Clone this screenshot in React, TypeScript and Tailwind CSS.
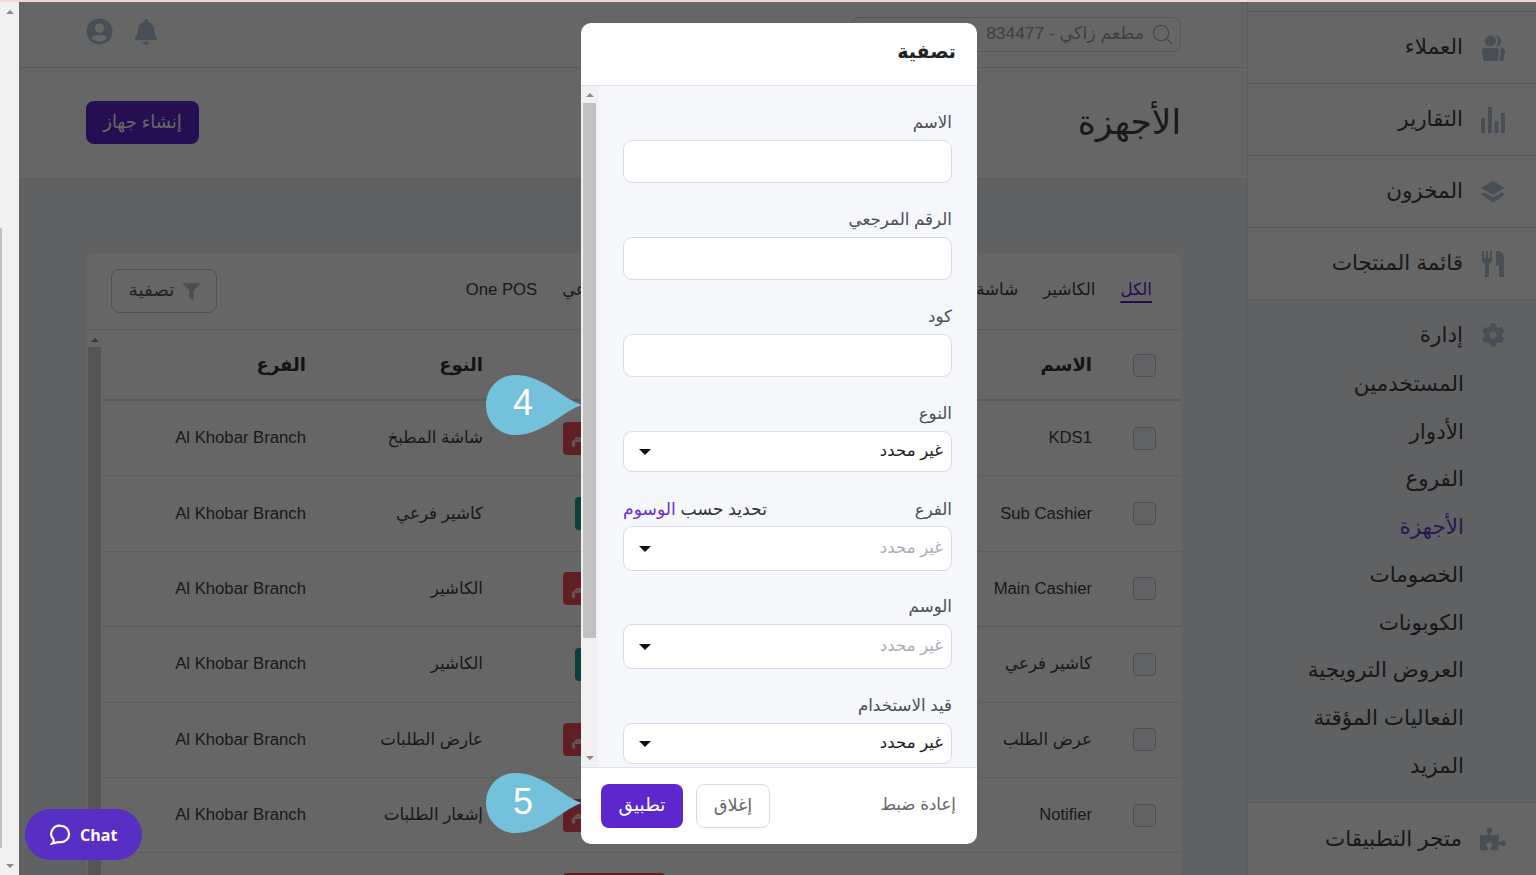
import { FaBell, FaCog, FaFilter, FaPuzzlePiece, FaUserCircle } from "react-icons/fa";

const tabs = ["الكل", "الكاشير", "شاشة المطبخ", "عرض الطلب", "إشعار الطلبات", "كاشير فرعي", "One POS"];

const rows = [
  { name: "KDS1", used: false, type: "شاشة المطبخ", branch: "Al Khobar Branch", border: "border-[#e6e8ee]" },
  { name: "Sub Cashier", used: true, type: "كاشير فرعي", branch: "Al Khobar Branch", border: "border-[#e6e8ee]" },
  { name: "Main Cashier", used: false, type: "الكاشير", branch: "Al Khobar Branch", border: "border-[#d9dce6]" },
  { name: "كاشير فرعي", used: true, type: "الكاشير", branch: "Al Khobar Branch", border: "border-[#e6e8ee]" },
  { name: "عرض الطلب", used: false, type: "عارض الطلبات", branch: "Al Khobar Branch", border: "border-[#e6e8ee]" },
  { name: "Notifier", used: false, type: "إشعار الطلبات", branch: "Al Khobar Branch", border: "border-[#e6e8ee]" },
];

const subItems = ["المستخدمين", "الأدوار", "الفروع", "الأجهزة", "الخصومات", "الكوبونات", "العروض الترويجية", "الفعاليات المؤقتة", "المزيد"];

function CustomersIcon() {
  return (
    <svg viewBox="0 0 24 26" className="w-6 h-[26px] fill-[#b4c4d6]">
      <circle cx="9.500" cy="6" r="5.500" />
      <path d="M14.500 0c3.200.4 5.500 2.800 5.500 6s-2.300 5.600-5.500 6c1.500-1.600 2.300-3.700 2.300-6s-.8-4.400-2.300-6z" />
      <path d="M1 16c0-1.700 1.300-3 3-3h11c1.700 0 3 1.300 3 3l-1.500 10h-14z" />
      <path d="M20 13c2.400 0 4 1.100 4 3l-1.500 10h-4z" />
    </svg>
  );
}

function ReportsIcon() {
  return (
    <svg viewBox="0 0 24 26" className="w-6 h-[26px] fill-[#b4c4d6]">
      <rect x="0" y="11" width="4" height="15" />
      <rect x="7" y="0" width="4" height="26" />
      <rect x="13.500" y="14" width="4" height="12" />
      <rect x="20" y="6" width="4" height="20" />
    </svg>
  );
}

function LayersIcon() {
  return (
    <svg viewBox="0 0 26 24" className="w-[26px] h-6 fill-[#b4c4d6]">
      <path d="M13 0l13 7.500L13 15 0 7.500z" />
      <path d="M3.500 12.500L13 18l9.500-5.500L26 14.500 13 24 0 14.500z" />
    </svg>
  );
}

function UtensilsIcon() {
  return (
    <svg viewBox="0 0 24 26" className="w-6 h-[26px] fill-[#b4c4d6]">
      <path d="M1 0h2v7h2V0h2v7h2V0h2v9c0 2-1 3.500-3 4v13H4V13c-2-.5-3-2-3-4z" />
      <path d="M15 0h1c4 0 7 2.500 7 7v19h-5V15h-3z" />
    </svg>
  );
}

function Caret() {
  return (
    <svg viewBox="0 0 12 6" className="w-3 h-1.5 fill-[#111]">
      <path d="M0 0h12L6 6z" />
    </svg>
  );
}

function Arrow({ down }: { down?: boolean }) {
  return (
    <svg viewBox="0 0 8 4" className="w-2 h-1 fill-[#8a8a8a]">
      <path d={down ? "M0 0h8L4 4z" : "M0 4h8L4 0z"} />
    </svg>
  );
}

function Callout({ n, top, nudge }: { n: number; top: string; nudge: string }) {
  return (
    <div dir="ltr" className={`absolute left-[486px] w-[96px] h-[60px] flex items-center ${top}`}>
      <svg viewBox="0 0 96 60" className="absolute inset-0 w-[96px] h-[60px] fill-[#74c1dc]">
        <path d="M96 30C78 25 58 0 29 0 13 0 0 13 0 30s13 30 29 30C58 60 78 35 96 30z" />
      </svg>
      <span className={`relative w-[74px] text-center text-[36px] leading-none text-white ${nudge}`}>{n}</span>
    </div>
  );
}

function Field({ label, mt, mb, children, extra }: { label: string; mt: string; mb: string; children: React.ReactNode; extra?: React.ReactNode }) {
  return (
    <div className={mt}>
      <div className={`h-[22px] pt-[2px] flex items-center justify-between text-[16.7px] text-[#4a4f57] ${mb}`}>
        <span>{label}</span>
        {extra}
      </div>
      {children}
    </div>
  );
}

function TextBox() {
  return <input className="block w-full h-[43px] bg-white border border-[#d8dcea] rounded-[9px]" />;
}

function SelectBox({ h, muted }: { h: string; muted?: boolean }) {
  return (
    <div className={`w-full bg-white border border-[#d8dcea] rounded-[9px] flex items-center justify-between pr-2 pl-[15px] ${h}`}>
      <span className={muted ? "text-[16.6px] text-[#a9aeb8]" : "text-[16.6px] text-[#222]"}>غير محدد</span>
      <Caret />
    </div>
  );
}

export default function App() {
  return (
    <div dir="rtl" className="relative w-[1536px] h-[875px] overflow-hidden bg-[#f0f2f7] text-[#3f3f3f] [font-family:'Liberation_Sans','DejaVu_Sans',sans-serif]">
      <div className="h-[2px] bg-[#f3d9d3]" />
      <div className="flex h-[873px]">
        {/* sidebar */}
        <aside className="w-[289px] shrink-0 bg-white border-l border-[#e3e5ec] text-[21.5px]">
          <div className="h-[10px] border-b border-[#e1e3ea]" />
          {[
            { label: "العملاء", icon: <CustomersIcon /> },
            { label: "التقارير", icon: <ReportsIcon /> },
            { label: "المخزون", icon: <LayersIcon /> },
            { label: "قائمة المنتجات", icon: <UtensilsIcon /> },
          ].map((item) => (
            <div key={item.label} className="h-[72px] flex items-center gap-[18px] pr-[31px] border-b border-[#e1e3ea]">
              <span className="w-6 flex justify-center">{item.icon}</span>
              <span className="-mt-[1px]">{item.label}</span>
            </div>
          ))}
          <div className="bg-[#f0f2f7] pb-3 border-b border-[#e1e3ea]">
            <div className="h-[60px] pt-[10px] flex items-center gap-[18px] pr-[31px]">
              <FaCog className="w-6 h-6 text-[#b4c4d6]" />
              <span>إدارة</span>
            </div>
            {subItems.map((item) => (
              <div key={item} className={item === "الأجهزة" ? "h-[47.75px] flex items-center pr-[72px] text-[#6a3cc4]" : "h-[47.75px] flex items-center pr-[72px]"}>
                {item}
              </div>
            ))}
          </div>
          <div className="h-[72px] flex items-center gap-[18px] pr-[30px]">
            <FaPuzzlePiece className="w-[26px] h-[26px] text-[#b4c4d6]" />
            <span>متجر التطبيقات</span>
          </div>
        </aside>

        {/* main */}
        <main className="w-[1228px] shrink-0 pb-10">
          <header className="h-[66px] bg-white border-b border-[#e1e3ea] flex items-center justify-between pr-[66px] pl-[67px]">
            <div className="w-[330px] h-[35px] border border-[#d8dcea] rounded-lg flex items-center gap-[8px] pr-[7px] text-[17.4px] text-[#9aa0aa]">
              <svg viewBox="0 0 22 22" className="w-[21px] h-[21px] fill-none stroke-[#a9afb9] stroke-[1.3]">
                <circle cx="9.500" cy="9.500" r="8" />
                <path d="M15 15l6 6" />
              </svg>
              <span className="-mt-[2px]">مطعم زاكي - 834477</span>
            </div>
            <div className="flex items-center gap-[21px] -mt-[6px]">
              <FaBell className="w-6 h-[26px] text-[#b4c4d6]" />
              <FaUserCircle className="w-[27px] h-[27px] text-[#b4c4d6]" />
            </div>
          </header>

          <div className="h-[111px] bg-white border-b border-[#e9ebf1] flex items-center justify-between pr-[66px] pl-[67px]">
            <h1 className="text-[34.4px] font-normal -mt-[1px]">الأجهزة</h1>
            <button className="w-[113px] h-[43px] -mt-[2px] bg-[#5d27cd] rounded-lg text-[18px] text-white">إنشاء جهاز</button>
          </div>

          <section className="mt-[74px] mr-[66px] ml-[67px] bg-white rounded-lg">
            <div className="h-[77px] border-b border-[#e1e3ea] flex items-center justify-between pr-[29px] pl-[25px]">
              <div className="flex items-center gap-[25px] text-[16.7px] -mt-[2px]">
                {tabs.map((tab, i) => (
                  <span key={tab} className={i === 0 ? "text-[#5d27cd] underline underline-offset-[6px] decoration-2" : i === 3 ? "ml-[10px]" : ""}>
                    {tab}
                  </span>
                ))}
              </div>
              <button className="w-[106px] h-[44px] border border-[#c7cbd8] rounded-lg flex items-center justify-center gap-2 text-[18.5px] text-[#555]">
                <FaFilter className="w-[17px] h-[17px] text-[#b4c4d6]" />
                <span className="-mt-[2px]">تصفية</span>
              </button>
            </div>

            <div className="flex">
              <div className="w-[1078px] shrink-0">
                <div className="h-[71px] pt-[2px] grid grid-cols-[89px_427px_182px_177px_203px] items-center border-b-2 border-[#dcdfe8] text-[18px] font-bold text-[#333]">
                  <span className="w-[23px] h-[23px] mr-[25px] bg-[#f3f4f8] border border-[#c0c4d0] rounded" />
                  <span>الاسم</span>
                  <span>الحالة</span>
                  <span>النوع</span>
                  <span>الفرع</span>
                </div>
                {rows.map((row) => (
                  <div key={row.name} className={`h-[75.4px] grid grid-cols-[89px_427px_182px_177px_203px] items-center border-b text-[16.7px] ${row.border}`}>
                    <span className="w-[23px] h-[23px] mr-[25px] bg-[#f3f4f8] border border-[#c0c4d0] rounded" />
                    <span className="-mt-[1px]">{row.name}</span>
                    {row.used ? (
                      <span className="w-[90px] h-[33px] flex items-center justify-center rounded bg-[#1aa19b] text-white overflow-hidden whitespace-nowrap text-[14px]">قيد الاستخدام</span>
                    ) : (
                      <span className="w-[102px] h-[33px] flex items-center justify-end pl-2 rounded bg-[#ef5259] text-[#ffd4d6] font-bold whitespace-nowrap text-[16px]">غير مستخدم</span>
                    )}
                    <span className="-mt-[1px]">{row.type}</span>
                    <span className="-mt-[1px]">{row.branch}</span>
                  </div>
                ))}
                {/* next row starts just under the fold */}
                <div className="h-[75px] grid grid-cols-[89px_427px_182px_177px_203px] pt-5">
                  <span />
                  <span />
                  <span className="w-[102px] h-[33px] rounded bg-[#ef5259]" />
                </div>
              </div>
              {/* table scroll bar */}
              <div className="w-[17px] shrink-0 flex flex-col items-center pt-2 gap-[5px]">
                <Arrow />
                <div className="w-[13px] h-[600px] bg-[#d4d4d4]" />
              </div>
            </div>
          </section>
        </main>

        {/* page scroll bar */}
        <div className="relative w-[19px] shrink-0 bg-[#f1f1f1]">
          <div className="absolute top-2 left-[6px]"><Arrow /></div>
          <div className="absolute top-[226px] left-0 w-[2px] h-[620px] bg-[#c1c1c1]" />
          <div className="absolute top-[862px] left-[6px]"><Arrow down /></div>
        </div>
      </div>

      {/* backdrop */}
      <div className="absolute top-[2px] bottom-0 right-0 left-[19px] bg-black/60" />

      {/* chat */}
      <div dir="ltr" className="absolute left-[25px] top-[809px] w-[117px] h-[51px] rounded-full bg-[#582fc4] flex items-center gap-[9px] pl-[25px] text-white text-[16px] font-bold [font-family:'Open_Sans',sans-serif]">
        <svg viewBox="0 0 22 22" className="w-[21px] h-[21px] fill-none stroke-white stroke-[2.300]">
          <path d="M11.500 2a8.500 8.500 0 0 1 0 17c-2.500 0-5.500.5-9 1.500 1.500-1.500 1.500-3 1-4.500A8.500 8.500 0 0 1 11.500 2z" />
        </svg>
        <span>Chat</span>
      </div>

      {/* filter modal */}
      <div className="absolute left-[581px] top-[23px] w-[396px] h-[821px] bg-white rounded-[10px] overflow-hidden flex flex-col">
        <div className="h-[63px] shrink-0 border-b border-[#dde2ee] flex items-center pr-[21px] pb-1 text-[19px] font-bold text-[#222]">تصفية</div>
        <div className="flex-1 min-h-0 flex bg-[#f5f7fb]">
          <div className="w-[379px] shrink-0 pr-[25px] pl-[25px] pt-[25px] overflow-hidden">
            <Field label="الاسم" mt="" mb="mb-[7px]"><TextBox /></Field>
            <Field label="الرقم المرجعي" mt="mt-[25px]" mb="mb-[7px]"><TextBox /></Field>
            <Field label="كود" mt="mt-[25px]" mb="mb-[7px]"><TextBox /></Field>
            <Field label="النوع" mt="mt-[25px]" mb="mb-[7px]"><SelectBox h="h-[41px]" /></Field>
            <Field
              label="الفرع"
              mt="mt-[26px]"
              mb="mb-[6px]"
              extra={<span className="text-[17.2px] text-[#333]">تحديد حسب <span className="text-[#6a2ed0]">الوسوم</span></span>}
            >
              <SelectBox h="h-[45px]" muted />
            </Field>
            <Field label="الوسم" mt="mt-[24px]" mb="mb-[7px]"><SelectBox h="h-[45px]" muted /></Field>
            <Field label="قيد الاستخدام" mt="mt-[25px]" mb="mb-[7px]"><SelectBox h="h-[41px]" /></Field>
          </div>
          <div className="relative w-[17px] shrink-0 bg-[#f1f1f1]">
            <div className="absolute top-[7px] left-[5px]"><Arrow /></div>
            <div className="absolute top-[17px] left-[2px] w-[13px] h-[535px] bg-[#c1c1c1]" />
            <div className="absolute bottom-[7px] left-[5px]"><Arrow down /></div>
          </div>
        </div>
        <div className="h-[77px] shrink-0 border-t border-[#dde2ee] flex items-center justify-between pr-[21px] pl-[20px]">
          <span className="text-[16.7px] text-[#666] -mt-[2px]">إعادة ضبط</span>
          <div className="flex items-center gap-[13px]">
            <button className="w-[74px] h-[44px] pb-[2px] bg-white border border-[#d8dcea] rounded-lg text-[17.7px] text-[#666]">إغلاق</button>
            <button className="w-[82px] h-[44px] pb-[2px] bg-[#5d27cd] rounded-lg text-[18.5px] text-white">تطبيق</button>
          </div>
        </div>
      </div>

      <Callout n={4} top="top-[375px]" nudge="-mt-[4px]" />
      <Callout n={5} top="top-[773px]" nudge="-mt-[2px]" />
    </div>
  );
}
